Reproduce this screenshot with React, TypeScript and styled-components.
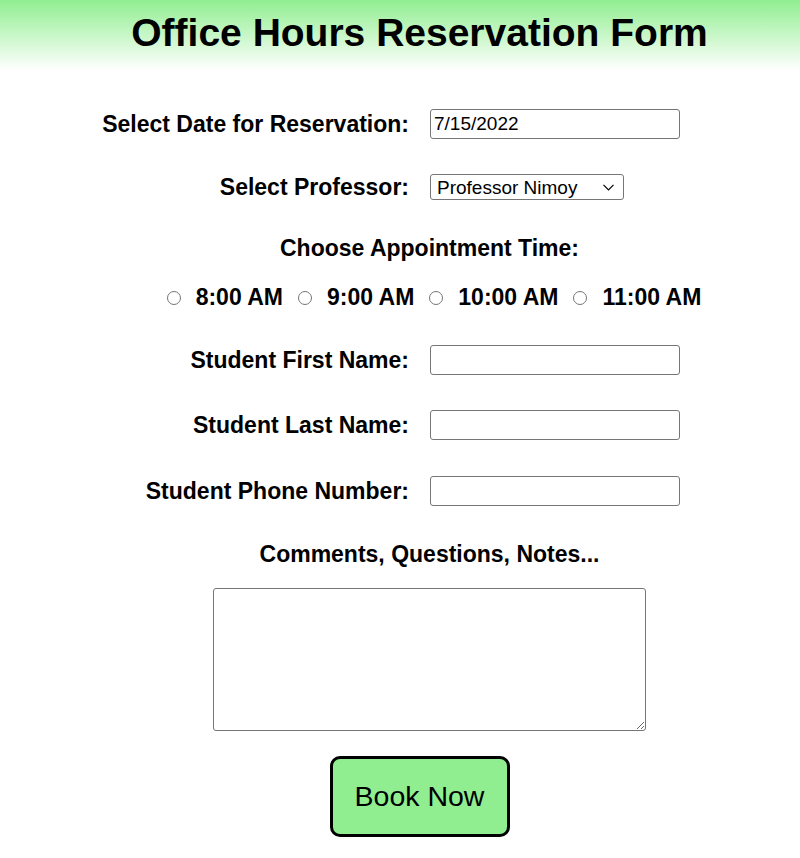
import * as React from "react";
import styled, { createGlobalStyle } from "styled-components";

const GlobalStyle = createGlobalStyle`
    body {
        margin: 0;
        background: #ffffff;
        font-family: "Liberation Sans", Arial, sans-serif;
        color: #000000;
    }
`;

const Page = styled.div`
    width: 800px;
    min-height: 858px;
    display: flex;
    flex-direction: column;
`;

const Header = styled.header`
    height: 70px;
    box-sizing: border-box;
    padding: 11px 0 0 39px;
    background: linear-gradient(to bottom, #90ee90, #ffffff);
`;

const Title = styled.h1`
    margin: 0;
    text-align: center;
    font-size: 39px;
    font-weight: bold;
    line-height: normal;
`;

const Form = styled.form`
    display: flex;
    flex-direction: column;
    align-items: center;
    padding-left: 39px;
`;

const FieldRow = styled.div<{ $mt: number }>`
    width: 100%;
    height: 30px;
    margin-top: ${(p) => p.$mt}px;
    display: grid;
    grid-template-columns: 1fr 1fr;
    column-gap: 21px;
    align-items: center;
`;

const Label = styled.label`
    text-align: right;
    font-size: 23px;
    font-weight: bold;
    white-space: nowrap;
`;

const Heading = styled.div<{ $mt: number }>`
    margin-top: ${(p) => p.$mt}px;
    margin-left: 20px;
    font-size: 23px;
    font-weight: bold;
    line-height: normal;
`;

const TextInput = styled.input`
    width: 250px;
    height: 30px;
    box-sizing: border-box;
    padding: 1px 3px;
    border: 1px solid #767676;
    border-radius: 3px;
    font-family: "Liberation Sans", Arial, sans-serif;
    font-size: 19px;
    color: #000000;
`;

const SelectWrap = styled.div`
    position: relative;
    width: 194px;
    height: 26px;
`;

const Select = styled.select`
    appearance: none;
    width: 194px;
    height: 26px;
    box-sizing: border-box;
    padding: 0 24px 0 6px;
    border: 1px solid #767676;
    border-radius: 3px;
    background: #ffffff;
    font-family: "Liberation Sans", Arial, sans-serif;
    font-size: 19px;
    color: #000000;
`;

const Chevron = styled.svg`
    position: absolute;
    right: 10px;
    top: 10px;
    width: 11px;
    height: 7px;
    pointer-events: none;
`;

const RadioGroup = styled.div<{ $mt: number }>`
    margin-top: ${(p) => p.$mt}px;
    margin-left: 29px;
    display: flex;
    align-items: center;
    gap: 15px;
`;

const RadioOption = styled.label`
    display: flex;
    align-items: center;
    gap: 15px;
    font-size: 23px;
    font-weight: bold;
    line-height: normal;
    white-space: nowrap;
`;

const Radio = styled.input`
    width: 14px;
    height: 14px;
    margin: 0;
`;

const Comments = styled.textarea<{ $mt: number }>`
    margin-top: ${(p) => p.$mt}px;
    margin-left: 20px;
    width: 433px;
    height: 143px;
    box-sizing: border-box;
    border: 1px solid #767676;
    border-radius: 3px;
    font-family: "Liberation Sans", Arial, sans-serif;
    font-size: 16px;
`;

const BookButton = styled.button<{ $mt: number }>`
    margin-top: ${(p) => p.$mt}px;
    width: 180px;
    height: 81px;
    box-sizing: border-box;
    border: 3px solid #000000;
    border-radius: 10px;
    background: #90ee90;
    font-family: "Liberation Sans", Arial, sans-serif;
    font-size: 28.5px;
    color: #000000;
    cursor: pointer;
`;

const times = ["8:00 AM", "9:00 AM", "10:00 AM", "11:00 AM"];

export default function App() {
    const [date, setDate] = React.useState("7/15/2022");
    const [time, setTime] = React.useState("");

    return (
        <>
            <GlobalStyle />
            <Page>
                <Header>
                    <Title>Office Hours Reservation Form</Title>
                </Header>
                <Form onSubmit={(e) => e.preventDefault()}>
                    <FieldRow $mt={39}>
                        <Label htmlFor="date">Select Date for Reservation:</Label>
                        <TextInput id="date" value={date} onChange={(e) => setDate(e.target.value)} />
                    </FieldRow>
                    <FieldRow $mt={33}>
                        <Label htmlFor="prof">Select Professor:</Label>
                        <SelectWrap>
                            <Select id="prof" defaultValue="nimoy">
                                <option value="nimoy">Professor Nimoy</option>
                                <option value="shatner">Professor Shatner</option>
                            </Select>
                            <Chevron viewBox="0 0 11 7">
                                <path d="M0.5 0.8 L5.5 5.8 L10.5 0.8" fill="none" stroke="#000" strokeWidth="1.2" />
                            </Chevron>
                        </SelectWrap>
                    </FieldRow>
                    <Heading $mt={33}>Choose Appointment Time:</Heading>
                    <RadioGroup $mt={22}>
                        {times.map((t) => (
                            <RadioOption key={t}>
                                <Radio
                                    type="radio"
                                    name="time"
                                    checked={time === t}
                                    onChange={() => setTime(t)}
                                />
                                {t}
                            </RadioOption>
                        ))}
                    </RadioGroup>
                    <FieldRow $mt={34}>
                        <Label htmlFor="first">Student First Name:</Label>
                        <TextInput id="first" />
                    </FieldRow>
                    <FieldRow $mt={35}>
                        <Label htmlFor="last">Student Last Name:</Label>
                        <TextInput id="last" />
                    </FieldRow>
                    <FieldRow $mt={36}>
                        <Label htmlFor="phone">Student Phone Number:</Label>
                        <TextInput id="phone" />
                    </FieldRow>
                    <Heading $mt={35}>Comments, Questions, Notes...</Heading>
                    <Comments $mt={20} />
                    <BookButton $mt={25} type="submit">Book Now</BookButton>
                </Form>
            </Page>
        </>
    );
}
